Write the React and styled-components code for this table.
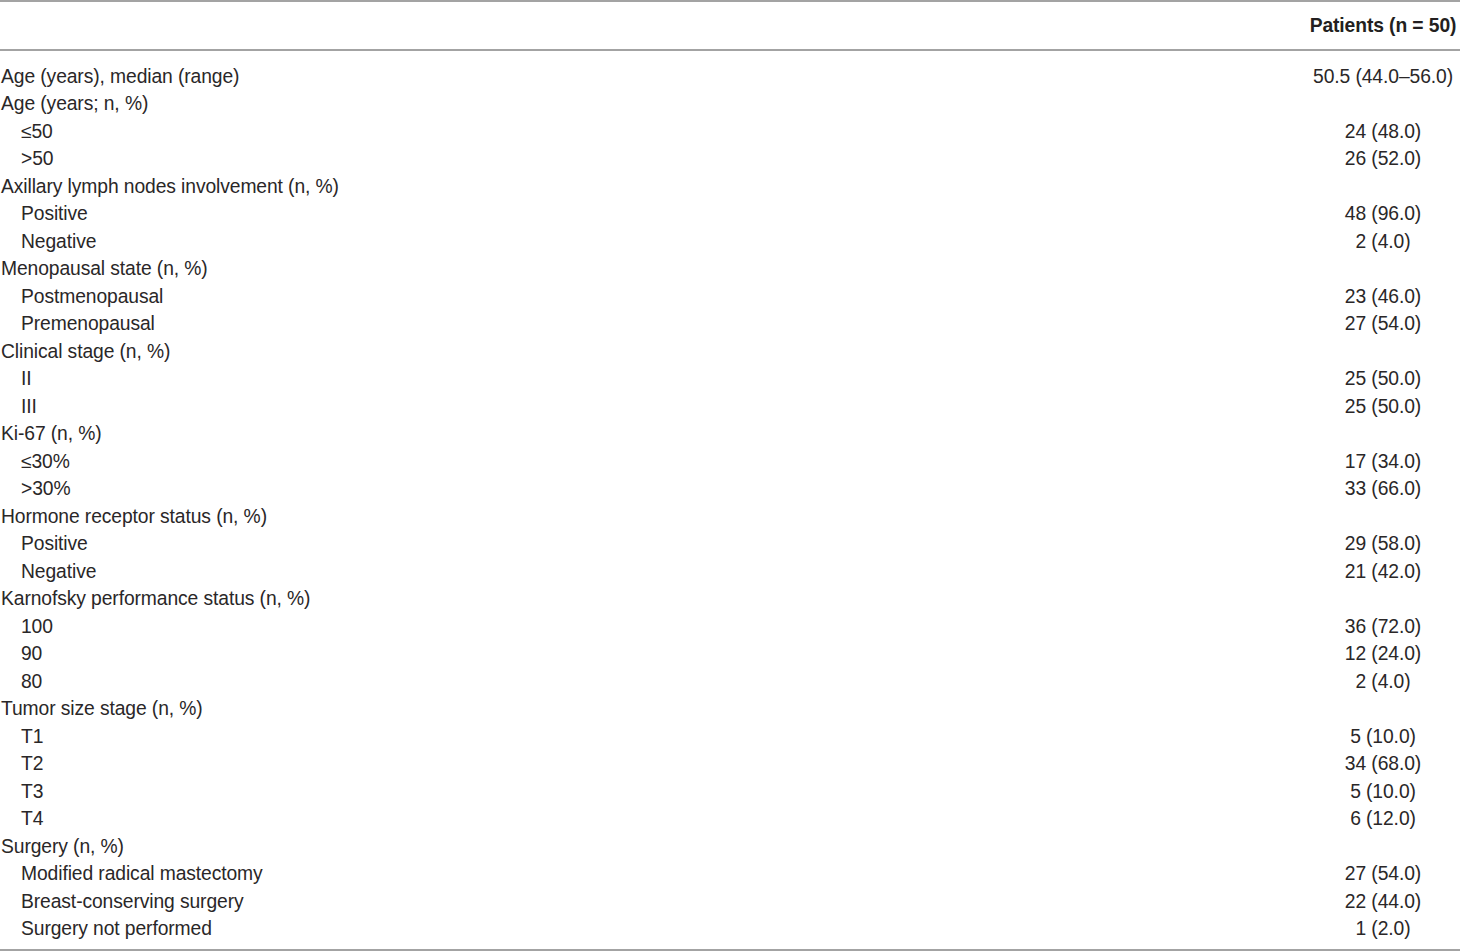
import styled, { createGlobalStyle } from 'styled-components';

const GlobalStyle = createGlobalStyle`
    html, body {
        margin: 0;
        padding: 0;
        background: #ffffff;
    }
    body {
        font-family: 'Liberation Sans', Arial, sans-serif;
        color: #2a2728;
    }
`;

const rows = [
    { label: 'Age (years), median (range)', value: '50.5 (44.0–56.0)' },
    { label: 'Age (years; n, %)' },
    { label: '≤50', value: '24 (48.0)', sub: true },
    { label: '>50', value: '26 (52.0)', sub: true },
    { label: 'Axillary lymph nodes involvement (n, %)' },
    { label: 'Positive', value: '48 (96.0)', sub: true },
    { label: 'Negative', value: '2 (4.0)', sub: true },
    { label: 'Menopausal state (n, %)' },
    { label: 'Postmenopausal', value: '23 (46.0)', sub: true },
    { label: 'Premenopausal', value: '27 (54.0)', sub: true },
    { label: 'Clinical stage (n, %)' },
    { label: 'II', value: '25 (50.0)', sub: true },
    { label: 'III', value: '25 (50.0)', sub: true },
    { label: 'Ki-67 (n, %)' },
    { label: '≤30%', value: '17 (34.0)', sub: true },
    { label: '>30%', value: '33 (66.0)', sub: true },
    { label: 'Hormone receptor status (n, %)' },
    { label: 'Positive', value: '29 (58.0)', sub: true },
    { label: 'Negative', value: '21 (42.0)', sub: true },
    { label: 'Karnofsky performance status (n, %)' },
    { label: '100', value: '36 (72.0)', sub: true },
    { label: '90', value: '12 (24.0)', sub: true },
    { label: '80', value: '2 (4.0)', sub: true },
    { label: 'Tumor size stage (n, %)' },
    { label: 'T1', value: '5 (10.0)', sub: true },
    { label: 'T2', value: '34 (68.0)', sub: true },
    { label: 'T3', value: '5 (10.0)', sub: true },
    { label: 'T4', value: '6 (12.0)', sub: true },
    { label: 'Surgery (n, %)' },
    { label: 'Modified radical mastectomy', value: '27 (54.0)', sub: true },
    { label: 'Breast-conserving surgery', value: '22 (44.0)', sub: true },
    { label: 'Surgery not performed', value: '1 (2.0)', sub: true },
];

function App() {
    return (
        <>
            <GlobalStyle />
            <Table>
                <HeaderRow>
                    <span />
                    <HeadCell>Patients (n = 50)</HeadCell>
                </HeaderRow>
                <Body>
                    {rows.map((row, i) => (
                        <Row key={i}>
                            <Label $sub={row.sub}>{row.label}</Label>
                            <Value>{row.value}</Value>
                        </Row>
                    ))}
                </Body>
            </Table>
        </>
    );
}

const Table = styled.div`
    width: 1460px;
    border-top: 2px solid #a3a3a3;
    border-bottom: 2px solid #a3a3a3;
    font-size: 19.3px;
    letter-spacing: -0.1px;
`;

const HeaderRow = styled.div`
    display: grid;
    grid-template-columns: 1fr 154px;
    align-items: center;
    height: 47px;
    border-bottom: 2px solid #a3a3a3;
`;

const HeadCell = styled.div`
    font-weight: 700;
    text-align: center;
    white-space: nowrap;
    color: #231f20;
`;

const Body = styled.div`
    padding: 12px 0 6px;
`;

const Row = styled.div`
    display: grid;
    grid-template-columns: 1fr 154px;
    align-items: center;
    height: 27.5px;
`;

const Label = styled.div`
    padding-left: ${(p) => (p.$sub ? '21px' : '1px')};
    white-space: nowrap;
`;

const Value = styled.div`
    text-align: center;
    white-space: nowrap;
`;

export default App;
